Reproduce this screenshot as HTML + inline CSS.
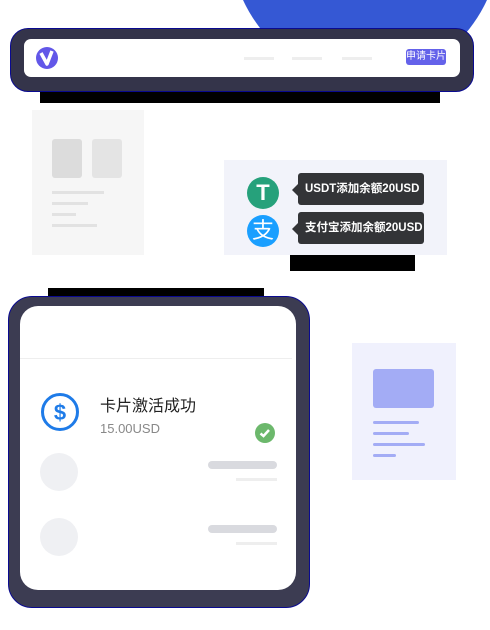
<!DOCTYPE html><html><head><meta charset="utf-8"><style>
*{margin:0;padding:0;box-sizing:border-box}
body{width:490px;height:630px;background:#fff;position:relative;overflow:hidden;font-family:"Liberation Sans","Noto Sans CJK SC",sans-serif}
.a{position:absolute}
</style></head><body>
<div class="a" style="left:230px;top:-200px;width:270px;height:280px;border-radius:50%;background:#3558d4"></div>
<div class="a" style="left:40px;top:88px;width:400px;height:15px;background:#000"></div>
<div class="a" style="left:10px;top:28px;width:464px;height:64px;border-radius:18px;background:#34344a;border:1px solid #0a0a90"></div>
<div class="a" style="left:24px;top:39px;width:436px;height:38px;border-radius:7px;background:#fff"></div>
<div class="a" style="left:36px;top:47px;width:22px;height:22px;border-radius:50%;background:#6257e8"></div>
<svg class="a" style="left:36px;top:47px" width="22" height="22"><path d="M5 6 L11 17 L16 4" stroke="#fff" stroke-width="3.5" fill="none" stroke-linejoin="round"/></svg>
<div class="a" style="left:244px;top:57px;width:30px;height:3px;background:#eee"></div>
<div class="a" style="left:292px;top:57px;width:30px;height:3px;background:#eee"></div>
<div class="a" style="left:342px;top:57px;width:30px;height:3px;background:#eee"></div>
<div class="a" style="left:406px;top:49px;width:40px;height:16px;border-radius:3px;background:#6462ea;color:#fff;font-size:10px;line-height:16px;text-align:center">申请卡片</div>

<div class="a" style="left:32px;top:110px;width:112px;height:145px;background:#f6f6f6"></div>
<div class="a" style="left:52px;top:139px;width:30px;height:39px;border-radius:3px;background:#dcdcdc"></div>
<div class="a" style="left:92px;top:139px;width:30px;height:39px;border-radius:3px;background:#e4e4e4"></div>
<div class="a" style="left:52px;top:191px;width:52px;height:3px;background:#e2e2e2"></div>
<div class="a" style="left:52px;top:202px;width:36px;height:3px;background:#e2e2e2"></div>
<div class="a" style="left:52px;top:213px;width:24px;height:3px;background:#e2e2e2"></div>
<div class="a" style="left:52px;top:224px;width:45px;height:3px;background:#e2e2e2"></div>

<div class="a" style="left:290px;top:255px;width:125px;height:16px;background:#000"></div>
<div class="a" style="left:224px;top:160px;width:223px;height:95px;background:#f2f3fa"></div>
<div class="a" style="left:247px;top:177px;width:32px;height:32px;border-radius:50%;background:#26a17b;color:#fff;font-weight:bold;font-size:22px;line-height:32px;text-align:center">T</div>
<div class="a" style="left:247px;top:215px;width:32px;height:32px;border-radius:50%;background:#1a9fff;color:#fff;font-size:22px;line-height:32px;text-align:center">支</div>
<div class="a" style="left:298px;top:173px;width:126px;height:32px;border-radius:3px;background:#333437;color:#fff;font-size:11.5px;font-weight:bold;line-height:32px;padding-left:7px">USDT添加余额20USD</div>
<div class="a" style="left:292px;top:184px;border:6px solid transparent;border-right-color:#333437;border-left:0"></div>
<div class="a" style="left:298px;top:212px;width:126px;height:32px;border-radius:3px;background:#333437;color:#fff;font-size:11.5px;font-weight:bold;line-height:32px;padding-left:7px">支付宝添加余额20USD</div>
<div class="a" style="left:292px;top:223px;border:6px solid transparent;border-right-color:#333437;border-left:0"></div>

<div class="a" style="left:48px;top:288px;width:216px;height:12px;background:#000"></div>
<div class="a" style="left:8px;top:296px;width:302px;height:312px;border-radius:24px;background:#3c3c52;border:1px solid #0a0a90"></div>
<div class="a" style="left:20px;top:306px;width:276px;height:284px;border-radius:18px;background:#fff"></div>
<div class="a" style="left:20px;top:358px;width:272px;height:1px;background:#eee"></div>
<svg class="a" style="left:40px;top:392px" width="40" height="40"><circle cx="20" cy="20" r="17.5" stroke="#1e7be8" stroke-width="3" fill="none"/><text x="20" y="28" text-anchor="middle" font-family="Liberation Sans" font-size="22" font-weight="bold" fill="#1e7be8">$</text></svg>
<div class="a" style="left:100px;top:392px;font-size:16px;color:#222">卡片激活成功</div>
<div class="a" style="left:100px;top:421px;font-size:13px;color:#888">15.00USD</div>
<svg class="a" style="left:255px;top:423px" width="20" height="20"><circle cx="10" cy="10" r="10" fill="#6cb86c"/><path d="M5.5 10.5 L8.5 13 L14 7" stroke="#fff" stroke-width="2.5" fill="none"/></svg>
<div class="a" style="left:40px;top:453px;width:38px;height:38px;border-radius:50%;background:#eff0f3"></div>
<div class="a" style="left:40px;top:518px;width:38px;height:38px;border-radius:50%;background:#eff0f3"></div>
<div class="a" style="left:208px;top:461px;width:69px;height:8px;border-radius:4px;background:#d9dadf"></div>
<div class="a" style="left:236px;top:478px;width:41px;height:3px;background:#eee"></div>
<div class="a" style="left:208px;top:525px;width:69px;height:8px;border-radius:4px;background:#d9dadf"></div>
<div class="a" style="left:236px;top:542px;width:41px;height:3px;background:#eee"></div>

<div class="a" style="left:352px;top:343px;width:104px;height:137px;background:#f0f1fd"></div>
<div class="a" style="left:373px;top:369px;width:61px;height:39px;border-radius:3px;background:#a3acf5"></div>
<div class="a" style="left:373px;top:421px;width:46px;height:3px;border-radius:2px;background:#a3acf5"></div>
<div class="a" style="left:373px;top:432px;width:36px;height:3px;border-radius:2px;background:#a3acf5"></div>
<div class="a" style="left:373px;top:443px;width:52px;height:3px;border-radius:2px;background:#a3acf5"></div>
<div class="a" style="left:373px;top:454px;width:23px;height:3px;border-radius:2px;background:#a3acf5"></div>
</body></html>
